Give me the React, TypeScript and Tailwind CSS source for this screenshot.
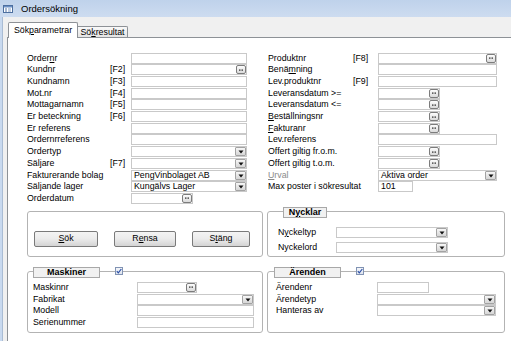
import React from "react";

function Lbl({ t, u, gray }: { t: string; u?: number; gray?: boolean }) {
  const cls = gray ? "text-[#8a8a8a] whitespace-nowrap" : "text-black whitespace-nowrap";
  if (u === undefined) return <span className={cls}>{t}</span>;
  return (
    <span className={cls}>
      {t.slice(0, u)}
      <span className="underline underline-offset-[1px]">{t[u]}</span>
      {t.slice(u + 1)}
    </span>
  );
}

function Ell() {
  return (
    <div className="w-[10px] h-[9px] shrink-0 rounded-[2px] border border-[#7c7c7c] bg-linear-to-b from-[#fdfdfd] to-[#dadada] flex items-center justify-center">
      <svg width="4" height="2" viewBox="0 0 4 2">
        <rect x="0" y="0.5" width="1.5" height="1.2" fill="#2a2a2a" />
        <rect x="2.5" y="0.5" width="1.5" height="1.2" fill="#2a2a2a" />
      </svg>
    </div>
  );
}

function Drop() {
  return (
    <div className="w-[11px] h-[9px] shrink-0 rounded-[1px] border border-[#a3a3a3] bg-linear-to-b from-[#f7f7f7] to-[#d6d6d6] flex items-end justify-center pb-[1px]">
      <svg width="6" height="4" viewBox="0 0 6 4">
        <path d="M0.5 0.5 H5.5 L3 3.5 Z" fill="#111" />
      </svg>
    </div>
  );
}

function Box({ w, children, right }: { w: string; children?: React.ReactNode; right?: React.ReactNode }) {
  return (
    <div className={`${w} h-[11px] shrink-0 border border-[#c9c9c9] bg-white flex items-center justify-between overflow-hidden`}>
      <span className="pl-[2px] leading-[9px] whitespace-nowrap">{children}</span>
      {right}
    </div>
  );
}

function Row({
  lw,
  fw,
  label,
  fk,
  children,
}: {
  lw: string;
  fw: string;
  label: React.ReactNode;
  fk?: string;
  children: React.ReactNode;
}) {
  return (
    <div className="h-[11.7px] flex items-center">
      <div className={`${lw} shrink-0`}>{label}</div>
      <div className={`${fw} shrink-0`}>{fk}</div>
      {children}
    </div>
  );
}

function Check() {
  return (
    <div className="w-[8px] h-[8px] border border-[#8193b3] bg-linear-to-b from-[#f4f6fa] to-[#dfe4ee] flex items-center justify-center">
      <svg width="6" height="6" viewBox="0 0 6 6">
        <path d="M0.8 3.2 L2.3 4.8 L5.3 1" stroke="#2a4ea6" strokeWidth="1.2" fill="none" />
      </svg>
    </div>
  );
}

function GTitle({ t, cls, u }: { t: string; cls: string; u?: number }) {
  return (
    <div
      className={`absolute ${cls} h-[11px] border border-[#a8a8a8] bg-[#f1f1f1] flex items-center justify-center font-bold text-[9px] leading-[9px]`}
    >
      <Lbl t={t} u={u} />
    </div>
  );
}

function Btn({ w, t, u }: { w: string; t: string; u: number }) {
  return (
    <div
      className={`${w} h-[16px] rounded-[2px] border border-[#7a7a7a] bg-linear-to-b from-[#f4f4f4] via-[#ebebeb] to-[#d4d4d4] flex items-center justify-center`}
    >
      <Lbl t={t} u={u} />
    </div>
  );
}

export default function App() {
  const LW = "w-[83px]";
  const FW = "w-[21px]";
  const RLW = "w-[85px]";
  const RFW = "w-[25px]";
  return (
    <div className="w-[511px] h-[341px] overflow-hidden bg-[#f0f0f0] font-['Liberation_Sans',Arial,sans-serif] text-[8.8px] leading-[11px] text-black flex flex-col">
      {/* title bar */}
      <div className="h-[17px] shrink-0 bg-linear-to-b from-[#bfd2eb] to-[#cddcf0] flex items-center">
        <div className="w-[3px]" />
        <svg width="10" height="8" viewBox="0 0 10 8" className="mt-[1px]">
          <rect x="0.5" y="0.5" width="9" height="7" fill="#ffffff" stroke="#4d6f9f" />
          <rect x="1" y="1" width="8" height="1.5" fill="#6b8fc4" />
          <rect x="2" y="3.5" width="2" height="1" fill="#4d6f9f" />
          <rect x="5" y="3.5" width="3" height="1" fill="#7f9cc7" />
          <rect x="2" y="5.5" width="2" height="1" fill="#4d6f9f" />
          <rect x="5" y="5.5" width="3" height="1" fill="#7f9cc7" />
        </svg>
        <span className="ml-[8px] text-[9.5px] text-black">Ordersökning</span>
      </div>
      {/* body */}
      <div className="flex-1 flex">
        <div className="w-[2px] bg-[#c8d9ef]" />
        <div className="w-[1px] bg-[#a9bcd4]" />
        <div className="w-[4px] bg-[#f0f0f0]" />
        <div className="flex-1 flex flex-col">
          {/* tabs */}
          <div className="h-[20px] shrink-0 flex items-end pl-[1px]">
            <div className="relative z-10 -mb-px w-[70px] h-[16px] border border-b-0 border-[#8d9196] rounded-t-[2px] bg-white flex items-center justify-center pb-[1px]">
              <Lbl t="Sökparametrar" u={3} />
            </div>
            <div className="w-[50px] h-[11px] border border-b-0 border-l-0 border-[#8d9196] rounded-tr-[2px] bg-linear-to-b from-[#f9f9f9] to-[#e4e4e4] flex items-center justify-center">
              <Lbl t="Sökresultat" u={2} />
            </div>
          </div>
          {/* page */}
          <div className="flex-1 border-t border-l border-[#8d9196] bg-white pt-[14.3px] pl-[19px]">
            <div className="flex gap-[21px]">
              {/* left column */}
              <div className="w-[220px] flex flex-col">
                <Row lw={LW} fw={FW} label={<Lbl t="Ordernr" u={5} />}>
                  <Box w="w-[116px]" />
                </Row>
                <Row lw={LW} fw={FW} label={<Lbl t="Kundnr" />} fk="[F2]">
                  <Box w="w-[116px]" right={<Ell />} />
                </Row>
                <Row lw={LW} fw={FW} label={<Lbl t="Kundnamn" />} fk="[F3]">
                  <Box w="w-[116px]" />
                </Row>
                <Row lw={LW} fw={FW} label={<Lbl t="Mot.nr" />} fk="[F4]">
                  <Box w="w-[116px]" />
                </Row>
                <Row lw={LW} fw={FW} label={<Lbl t="Mottagarnamn" />} fk="[F5]">
                  <Box w="w-[116px]" />
                </Row>
                <Row lw={LW} fw={FW} label={<Lbl t="Er beteckning" />} fk="[F6]">
                  <Box w="w-[116px]" />
                </Row>
                <Row lw={LW} fw={FW} label={<Lbl t="Er referens" />}>
                  <Box w="w-[116px]" />
                </Row>
                <Row lw={LW} fw={FW} label={<Lbl t="Ordernrreferens" />}>
                  <Box w="w-[116px]" />
                </Row>
                <Row lw={LW} fw={FW} label={<Lbl t="Ordertyp" />}>
                  <Box w="w-[116px]" right={<Drop />} />
                </Row>
                <Row lw={LW} fw={FW} label={<Lbl t="Säljare" />} fk="[F7]">
                  <Box w="w-[116px]" right={<Drop />} />
                </Row>
                <Row lw={LW} fw={FW} label={<Lbl t="Fakturerande bolag" />}>
                  <Box w="w-[116px]" right={<Drop />}>
                    PengVinbolaget AB
                  </Box>
                </Row>
                <Row lw={LW} fw={FW} label={<Lbl t="Säljande lager" />}>
                  <Box w="w-[116px]" right={<Drop />}>
                    Kungälvs Lager
                  </Box>
                </Row>
                <Row lw={LW} fw={FW} label={<Lbl t="Orderdatum" />}>
                  <Box w="w-[62px]" right={<Ell />} />
                </Row>
              </div>
              {/* right column */}
              <div className="w-[229px] flex flex-col">
                <Row lw={RLW} fw={RFW} label={<Lbl t="Produktnr" />} fk="[F8]">
                  <Box w="w-[119px]" right={<Ell />} />
                </Row>
                <Row lw={RLW} fw={RFW} label={<Lbl t="Benämning" u={4} />}>
                  <Box w="w-[119px]" />
                </Row>
                <Row lw={RLW} fw={RFW} label={<Lbl t="Lev.produktnr" />} fk="[F9]">
                  <Box w="w-[119px]" />
                </Row>
                <Row lw={RLW} fw={RFW} label={<Lbl t="Leveransdatum >=" />}>
                  <Box w="w-[62px]" right={<Ell />} />
                </Row>
                <Row lw={RLW} fw={RFW} label={<Lbl t="Leveransdatum <=" />}>
                  <Box w="w-[62px]" right={<Ell />} />
                </Row>
                <Row lw={RLW} fw={RFW} label={<Lbl t="Beställningsnr" u={0} />}>
                  <Box w="w-[62px]" right={<Ell />} />
                </Row>
                <Row lw={RLW} fw={RFW} label={<Lbl t="Fakturanr" u={0} />}>
                  <Box w="w-[62px]" right={<Ell />} />
                </Row>
                <Row lw={RLW} fw={RFW} label={<Lbl t="Lev.referens" />}>
                  <Box w="w-[119px]" />
                </Row>
                <Row lw={RLW} fw={RFW} label={<Lbl t="Offert giltig fr.o.m." />}>
                  <Box w="w-[62px]" right={<Ell />} />
                </Row>
                <Row lw={RLW} fw={RFW} label={<Lbl t="Offert giltig t.o.m." />}>
                  <Box w="w-[62px]" right={<Ell />} />
                </Row>
                <Row lw={RLW} fw={RFW} label={<Lbl t="Urval" u={0} gray />}>
                  <Box w="w-[119px]" right={<Drop />}>
                    Aktiva order
                  </Box>
                </Row>
                <Row lw="w-[110px]" fw="w-[0px]" label={<Lbl t="Max poster i sökresultat" />}>
                  <Box w="w-[35px]">101</Box>
                </Row>
              </div>
            </div>

            {/* first group row */}
            <div className="mt-[6.6px] flex gap-[4px]">
              <div className="w-[236px] h-[46px] border border-[#b3b3b3] rounded-[3px] pt-[19px] pl-[6px] flex gap-[16px] items-start">
                <Btn w="w-[64px]" t="Sök" u={0} />
                <Btn w="w-[62px]" t="Rensa" u={1} />
                <Btn w="w-[58px]" t="Stäng" u={1} />
              </div>
              <div className="relative w-[238px] h-[46px] border border-[#b3b3b3] rounded-[3px] pt-[15px] pl-[10px] flex flex-col gap-[4px]">
                <GTitle t="Nycklar" u={1} cls="left-[15px] top-[-5px] w-[44px]" />
                <div className="h-[11px] flex items-center">
                  <div className="w-[58px] shrink-0">
                    <Lbl t="Nyckeltyp" u={1} />
                  </div>
                  <Box w="w-[112px]" right={<Drop />} />
                </div>
                <div className="h-[11px] flex items-center">
                  <div className="w-[58px] shrink-0">
                    <Lbl t="Nyckelord" />
                  </div>
                  <Box w="w-[112px]" right={<Drop />} />
                </div>
              </div>
            </div>

            {/* second group row */}
            <div className="mt-[14px] flex gap-[4px]">
              <div className="relative w-[236px] h-[62px] border border-[#b3b3b3] rounded-[3px] pt-[9.7px] pl-[5px] flex flex-col">
                <GTitle t="Maskiner" cls="left-[5px] top-[-5px] w-[67px]" />
                <div className="absolute left-[87px] top-[-5px]">
                  <Check />
                </div>
                <Row lw="w-[104px]" fw="w-[0px]" label={<Lbl t="Maskinnr" />}>
                  <Box w="w-[60px]" right={<Ell />} />
                </Row>
                <Row lw="w-[104px]" fw="w-[0px]" label={<Lbl t="Fabrikat" />}>
                  <Box w="w-[117px]" right={<Drop />} />
                </Row>
                <Row lw="w-[104px]" fw="w-[0px]" label={<Lbl t="Modell" />}>
                  <Box w="w-[117px]" />
                </Row>
                <Row lw="w-[104px]" fw="w-[0px]" label={<Lbl t="Serienummer" />}>
                  <Box w="w-[117px]" />
                </Row>
              </div>
              <div className="relative w-[238px] h-[62px] border border-[#b3b3b3] rounded-[3px] pt-[9.7px] pl-[8px] flex flex-col">
                <GTitle t="Ärenden" cls="left-[6px] top-[-5px] w-[67px]" />
                <div className="absolute left-[88px] top-[-5px]">
                  <Check />
                </div>
                <Row lw="w-[101px]" fw="w-[0px]" label={<Lbl t="Ärendenr" />}>
                  <Box w="w-[52px]" />
                </Row>
                <Row lw="w-[101px]" fw="w-[0px]" label={<Lbl t="Ärendetyp" />}>
                  <Box w="w-[119px]" right={<Drop />} />
                </Row>
                <Row lw="w-[101px]" fw="w-[0px]" label={<Lbl t="Hanteras av" />}>
                  <Box w="w-[119px]" right={<Drop />} />
                </Row>
              </div>
            </div>
          </div>
        </div>
      </div>
    </div>
  );
}
